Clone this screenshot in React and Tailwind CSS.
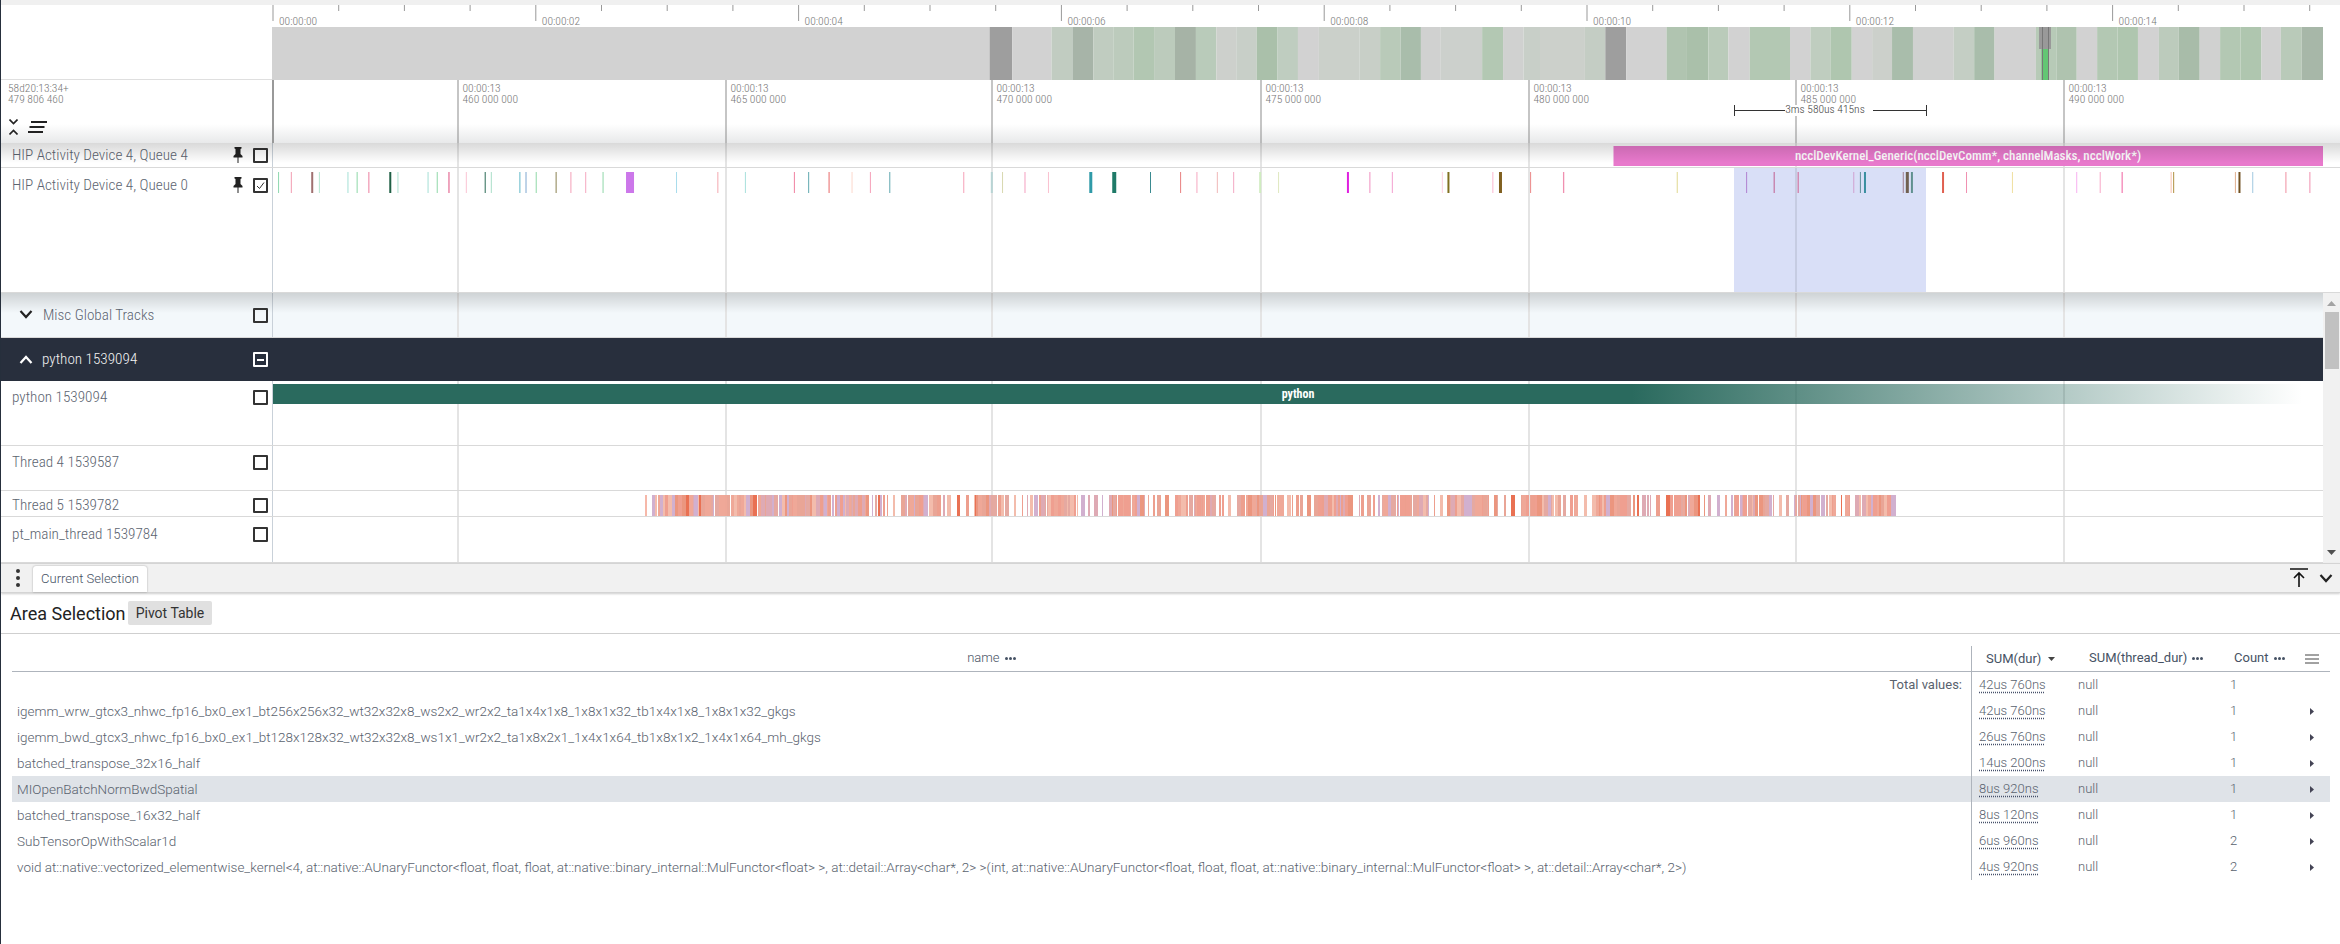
import { Fragment } from 'react';

const FONT = 'Roboto, sans-serif';
const GRID = [458, 726, 992, 1261, 1529, 1796, 2064];

// zoom crops were squeezed by 1.96 horizontally, so the numbers below are read off them and converted back
const at = (base, list) => list.map(([v, c, w = 1]) => [base + v / 1.96, c, w]);
const seg = (base, list) => list.map(([a, b, c]) => [base + a / 1.96, base + b / 1.96, c]);

const QUEUE_MARKS = [
  ...at(0, [[545, '#8ed8b0'], [570, '#f29bb0'], [610, '#a07070', 2], [625, '#b5e5d0'], [681, '#a5e0d5'], [699, '#8ed8a8'], [722, '#ec7f9f'], [763, '#1f5f45', 2], [779, '#aee0d0'], [838, '#a5dfd5'], [856, '#90d8a8'], [879, '#e04f80'], [913, '#fbc4d4'], [950, '#2a6a55'], [962, '#aadfc8'], [1018, '#60b8c8'], [1030, '#7fa8d0'], [1050, '#90d8a8'], [1089, '#8a8050'], [1118, '#f4a0b8'], [1147, '#f6a8c0'], [1181, '#90d8a8'], [1227, '#cc77ea', 8], [1325, '#a8dcec'], [1406, '#f4a8b0'], [1460, '#a8e0dc'], [1556, '#f080a0']]),
  ...at(800, [[16, '#60a8b0'], [56, '#e86868'], [101, '#fcd8cc'], [137, '#f6a0b8'], [175, '#60a8b0'], [320, '#f6a0b8'], [374, '#b8d4d4', 2], [396, '#d8d8b0'], [440, '#f4a0c0'], [486, '#fac0d0'], [567, '#2f9aa8', 3], [612, '#1f7a68', 4], [686, '#3a8a90'], [745, '#e88080'], [777, '#f6a8c0'], [817, '#f0b8b8'], [849, '#f4a8c4'], [900, '#d0ecc0', 2], [937, '#e0e8c0'], [1072, '#e020e0', 2], [1116, '#f090c0'], [1160, '#f4a0d0'], [1258, '#fcd0e0'], [1269, '#807020', 2], [1357, '#fab8d0'], [1370, '#806020', 3], [1431, '#ec8888'], [1496, '#f090b0']]),
  ...at(1540, [[45, '#f090b0'], [268, '#e0d890'], [404, '#b080d0'], [458, '#c06090'], [505, '#d06090'], [614, '#d0a0d0'], [627, '#609098'], [635, '#3a8fa0', 2], [711, '#a08090'], [717, '#706050', 3], [727, '#60908f', 2], [788, '#e06050', 2], [835, '#f090b0'], [925, '#f0e0a0'], [1051, '#f8b0f0'], [1097, '#f8a8c8'], [1140, '#f060a0'], [1236, '#f8c0b0'], [1241, '#b09040'], [1362, '#e0b090'], [1369, '#705020', 2], [1396, '#a0c8e0'], [1461, '#f090a0'], [1508, '#f090b0']]),
];

const OVERVIEW = [
  [272, 990, '#d2d2d2'],
  ...seg(800, [[372, 416, '#9e9e9e'], [416, 493, '#d2d2d2'], [493, 534, '#c1ccc1'], [534, 575, '#a7b4a8'], [575, 614, '#c0ccc0'], [614, 654, '#bccbbc'], [654, 694, '#b2c7b2'], [694, 735, '#bccbbc'], [735, 776, '#a6b3a6'], [776, 816, '#b9cbba'], [816, 855, '#cdd0cc'], [855, 895, '#c8cfc8'], [895, 936, '#aac0aa'], [936, 976, '#bfcdc0'], [976, 1017, '#d2d2d2'], [1017, 1097, '#cbd0ca'], [1097, 1137, '#c8cfc7'], [1137, 1177, '#b9cab9'], [1177, 1217, '#a9bdab'], [1217, 1256, '#d0d1d0'], [1256, 1337, '#ccd0cc'], [1337, 1378, '#b3c8b3'], [1378, 1418, '#d0d1d0'], [1418, 1457, '#c8cfc8'], [1457, 1500, '#cdd0cc']]),
  ...seg(1540, [[0, 88, '#ccd0cb'], [88, 128, '#c4cdc4'], [128, 169, '#9e9e9e'], [169, 248, '#d2d2d2'], [248, 288, '#b0c4b0'], [288, 330, '#aac0aa'], [330, 369, '#bacbba'], [369, 411, '#d2d2d2'], [411, 490, '#b3c8b3'], [490, 530, '#d2d2d2'], [530, 570, '#bfcdbf'], [570, 611, '#afc6af'], [611, 651, '#d2d2d2'], [651, 690, '#ccd0cb'], [690, 731, '#a9bdab'], [731, 811, '#d0d1d0'], [811, 851, '#c4cec4'], [851, 891, '#a9bdab'], [891, 972, '#d2d2d2'], [972, 1012, '#b7cab7'], [1012, 1052, '#afc3af'], [1052, 1092, '#d2d2d2'], [1092, 1132, '#b3c8b3'], [1132, 1172, '#afc6af'], [1172, 1213, '#d2d2d2'], [1213, 1252, '#bccbbc'], [1252, 1293, '#a8bca9'], [1293, 1333, '#d0d1d0'], [1333, 1373, '#b3c8b3'], [1373, 1414, '#afc6af'], [1414, 1452, '#d2d2d2'], [1452, 1493, '#b9cab9'], [1493, 1535, '#a7b7a8']]),
];

// thread 5 is a dense run of tiny slices, a seeded generator is close enough
function threadSlices() {
  const colors = ['#ec9a88', '#e8a090', '#eea392', '#dca5b0', '#cfaccc', '#f2b8a8', '#ea9078', '#ee9a8a', '#e4a49c'];
  let seed = 1539782;
  const rnd = () => {
    seed = (seed * 16807) % 2147483647;
    return seed / 2147483647;
  };
  const out = [[645.5, '#ec6a4a', 1]];
  let x = 652;
  while (x < 1895) {
    const w = 1 + Math.floor(rnd() * 4);
    const c = rnd() > 0.97 ? '#e8694a' : colors[Math.floor(rnd() * colors.length)];
    out.push([x, c, w]);
    const dense = x < 835 || Math.sin(x / 11) > -0.1;
    x += w + (dense ? (rnd() > 0.92 ? 1 : 0) : Math.floor(rnd() * 7));
  }
  return out;
}
const THREAD_MARKS = threadSlices();

function Canvas({ top, height, children }) {
  return (
    <svg width={2051} height={height} viewBox={`272 ${top} 2051 ${height}`} className="block shrink-0">
      <rect x={272} y={top} width={1} height={height} fill="#c9d1d9" />
      {GRID.map((x) => (
        <rect key={x} x={x - 1} y={top} width={2} height={height} fill="#e4e4e4" />
      ))}
      {children}
    </svg>
  );
}

function Marks({ list, y, height, opacity }) {
  return list.map(([x, c, w], i) => <rect key={i} x={x} y={y} width={w} height={height} fill={c} opacity={opacity} />);
}

function Overview() {
  const major = [0, 1, 2, 3, 4, 5, 6, 7];
  const minor = Array.from({ length: 32 }, (_, i) => i);
  return (
    <svg width={2051} height={75} viewBox="272 5 2051 75" className="block shrink-0">
      {minor.map((i) => (
        <rect key={i} x={272.5 + i * 65.7} y={5} width={1} height={i % 4 === 0 ? 16 : 6} fill="#999" />
      ))}
      {major.map((i) => (
        <text key={i} x={279 + i * 262.8} y={25} fontSize={11.5} fontWeight={300} fontStretch="75%" fill="#777" fontFamily={FONT}>
          {`00:00:${String(i * 2).padStart(2, '0')}`}
        </text>
      ))}
      {OVERVIEW.map(([a, b, c], i) => (
        <rect key={i} x={a} y={27} width={b - a} height={53} fill={c} />
      ))}
      <rect x={2039} y={27} width={12} height={22} fill="#999" />
      <rect x={2041.5} y={49} width={7} height={31} fill="#63c774" />
      <rect x={2042} y={27} width={1} height={53} fill="#777" />
      <rect x={2048} y={27} width={1} height={53} fill="#777" />
    </svg>
  );
}

function TimeHeader() {
  const labels = [
    [458, '460 000 000'], [726, '465 000 000'], [992, '470 000 000'], [1261, '475 000 000'],
    [1529, '480 000 000'], [1796, '485 000 000'], [2064, '490 000 000'],
  ];
  return (
    <svg width={2051} height={63} viewBox="272 80 2051 63" className="block shrink-0">
      <rect x={272} y={80} width={2} height={63} fill="#999" />
      {labels.map(([x, t]) => (
        <Fragment key={x}>
          <rect x={x - 0.5} y={80} width={1} height={63} fill="#8c8c8c" />
          <text x={x + 4.5} y={92} fontSize={11.5} fontWeight={300} fontStretch="75%" fill="#777" fontFamily={FONT}>00:00:13</text>
          <text x={x + 4.5} y={103} fontSize={11.5} fontWeight={300} fontStretch="75%" fill="#777" fontFamily={FONT}>{t}</text>
        </Fragment>
      ))}
      <rect x={1785} y={105} width={89} height={11} fill="#fff" />
      <rect x={1734} y={110} width={51} height={1} fill="#333" />
      <rect x={1873} y={110} width={53} height={1} fill="#333" />
      <rect x={1734} y={105} width={1} height={11} fill="#333" />
      <rect x={1926} y={105} width={1} height={11} fill="#333" />
      <text x={1825} y={113} textAnchor="middle" fontSize={11.5} fontWeight={300} fontStretch="75%" fill="#444" fontFamily={FONT}>3ms 580us 415ns</text>
    </svg>
  );
}

function PinIcon() {
  return (
    <svg width={10} height={16} viewBox="0 0 10 16" className="shrink-0">
      <path d="M1.5 0h7v1.5l-1 .5v5l2 2v1.5H5.5V16h-1v-5.5H.5V9l2-2V2l-1-.5z" fill="#222" />
    </svg>
  );
}

function Checkbox({ checked, minus }) {
  const color = minus ? 'border-white' : 'border-[#333]';
  return (
    <div className={`relative flex h-[15px] w-[15px] shrink-0 items-center justify-center rounded-[1px] border-2 ${color}`}>
      {checked && (
        <svg width={9} height={9} viewBox="0 0 9 9" fill="none" stroke="#333" strokeWidth={1}>
          <path d="M1 5l2.5 2.5L8 1.5" />
        </svg>
      )}
      {minus && <div className="h-[2px] w-[7px] bg-white" />}
    </div>
  );
}

function Chevron({ up, color = '#222' }) {
  return (
    <svg width={14} height={9} viewBox="0 0 14 9" fill="none" stroke={color} strokeWidth={2.2} className="shrink-0">
      <path d={up ? 'M1.5 8L7 2l5.5 6' : 'M1.5 1L7 7l5.5-6'} />
    </svg>
  );
}

function TrackRow({ label, labelH, pinned, checked, height, top, children, className = '', shadow }) {
  return (
    <div className={`relative flex shrink-0 border-b border-[#d9d9d9] ${height} ${className}`}>
      <div className={`flex w-[271px] shrink-0 items-center pl-[11px] pr-[4px] text-[15.2px] font-light text-[#5c6470] [font-stretch:75%] ${labelH}`}>
        <span className="flex-1 truncate">{label}</span>
        {pinned && <div className="mr-[10px]"><PinIcon /></div>}
        <Checkbox checked={checked} />
      </div>
      <Canvas top={top} height={parseInt(height.slice(3)) - 1}>{children}</Canvas>
      {shadow && <div className="pointer-events-none absolute inset-x-0 top-0 h-5 bg-gradient-to-b from-black/15 to-transparent" />}
    </div>
  );
}

const ROWS = [
  ['igemm_wrw_gtcx3_nhwc_fp16_bx0_ex1_bt256x256x32_wt32x32x8_ws2x2_wr2x2_ta1x4x1x8_1x8x1x32_tb1x4x1x8_1x8x1x32_gkgs', '42us 760ns', '1'],
  ['igemm_bwd_gtcx3_nhwc_fp16_bx0_ex1_bt128x128x32_wt32x32x8_ws1x1_wr2x2_ta1x8x2x1_1x4x1x64_tb1x8x1x2_1x4x1x64_mh_gkgs', '26us 760ns', '1'],
  ['batched_transpose_32x16_half', '14us 200ns', '1'],
  ['MIOpenBatchNormBwdSpatial', '8us 920ns', '1'],
  ['batched_transpose_16x32_half', '8us 120ns', '1'],
  ['SubTensorOpWithScalar1d', '6us 960ns', '2'],
  ['void at::native::vectorized_elementwise_kernel<4, at::native::AUnaryFunctor<float, float, float, at::native::binary_internal::MulFunctor<float> >, at::detail::Array<char*, 2> >(int, at::native::AUnaryFunctor<float, float, float, at::native::binary_internal::MulFunctor<float> >, at::detail::Array<char*, 2>)', '4us 920ns', '2'],
];

const COLS = 'grid grid-cols-[1960px_99px_154px_75px_30px]';

function Dots() {
  return (
    <span className="ml-[2px] inline-flex gap-px align-middle">
      <i className="h-[3px] w-[3px] rounded-full bg-[#465264]" />
      <i className="h-[3px] w-[3px] rounded-full bg-[#465264]" />
      <i className="h-[3px] w-[3px] rounded-full bg-[#465264]" />
    </span>
  );
}

function Value({ text }) {
  return (
    <div className="pl-[7px] font-light">
      <span className="underline decoration-dotted decoration-[#46506a] underline-offset-[3px]">{text}</span>
    </div>
  );
}

function SelectionTable() {
  return (
    <div className="ml-[11px] mt-3 w-[2318px] text-[13px] text-[#59626e]">
      <div className={`${COLS} h-[26px] border-b border-[#aeb4bc] leading-[24px] text-[#465264]`}>
        <div className="border-r border-[#aeb4bc] text-center font-light">name <Dots /></div>
        <div className="flex items-center pl-[14px]">
          SUM(dur)
          <svg width={7} height={4} viewBox="0 0 7 4" className="ml-[7px]"><path d="M0 0h7L3.5 4z" fill="#444" /></svg>
        </div>
        <div className="pl-[18px]">SUM(thread_dur) <Dots /></div>
        <div className="pl-[9px]">Count <Dots /></div>
        <div className="flex items-center pl-[5px]">
          <svg width={14} height={10} viewBox="0 0 14 10" stroke="#444" strokeWidth={1}>
            <path d="M0 1h14M0 5h14M0 9h14" />
          </svg>
        </div>
      </div>
      <div className={`${COLS} h-[26px] leading-[26px]`}>
        <div className="border-r border-[#aeb4bc] pr-[9px] text-right">Total values:</div>
        <Value text="42us 760ns" />
        <div className="pl-[7px] font-light">null</div>
        <div className="pl-[5px] font-light">1</div>
        <div />
      </div>
      {ROWS.map(([name, dur, count]) => (
        <div key={name} className={`${COLS} h-[26px] leading-[26px] ${name.startsWith('MIOpen') ? 'bg-[#dfe3e8]' : ''}`}>
          <div className="truncate border-r border-[#aeb4bc] pl-[5px] text-[13.5px] font-light">{name}</div>
          <Value text={dur} />
          <div className="pl-[7px] font-light">null</div>
          <div className="pl-[5px] font-light">{count}</div>
          <div className="flex items-center pl-[10px]">
            <svg width={4} height={7} viewBox="0 0 4 7"><path d="M0 0l4 3.5L0 7z" fill="#445" /></svg>
          </div>
        </div>
      ))}
    </div>
  );
}

export default function App() {
  return (
    <div className="flex h-screen w-screen flex-col overflow-hidden border-l border-[#262f3c] bg-white" style={{ fontFamily: FONT }}>
      <div className="h-[5px] shrink-0 bg-[#f0f0f0]" />

      <div className="flex h-[75px] shrink-0">
        <div className="w-[271px] shrink-0 border-b border-[#dfdfdf]" />
        <Overview />
      </div>

      <div className="flex h-[63px] shrink-0 bg-gradient-to-b from-white from-70% to-[#e8e9ea]">
        <div className="flex w-[271px] shrink-0 flex-col pl-[7px] pt-[3px] text-[11.5px] font-light leading-[11px] text-[#777] [font-stretch:75%]">
          <div>58d20:13:34+</div>
          <div>479 806 460</div>
          <div className="mt-[14px] flex items-center gap-[10px] pl-[1px]">
            <div className="flex flex-col gap-[4px]">
              <svg width={9} height={6} viewBox="0 0 9 6" fill="none" stroke="#222" strokeWidth={1.6}><path d="M.5 .5l4 4 4-4" /></svg>
              <svg width={9} height={6} viewBox="0 0 9 6" fill="none" stroke="#222" strokeWidth={1.6}><path d="M.5 5.5l4-4 4 4" /></svg>
            </div>
            <svg width={19} height={12} viewBox="0 0 19 12" stroke="#222" strokeWidth={2}>
              <path d="M3 1h16M1.5 6h15M0 11h15" />
            </svg>
          </div>
        </div>
        <TimeHeader />
      </div>

      <TrackRow label="HIP Activity Device 4, Queue 4" labelH="h-[24px]" height="h-[25px]" top={143} pinned shadow>
        <rect x={1613.5} y={146} width={710} height={20} fill="#e879cc" />
        <text x={1968} y={160} textAnchor="middle" fontSize={13} fontWeight={500} fontStretch="75%" fill="#fff" fontFamily={FONT}>
          ncclDevKernel_Generic(ncclDevComm*, channelMasks, ncclWork*)
        </text>
      </TrackRow>

      <TrackRow label="HIP Activity Device 4, Queue 0" labelH="h-[34px]" height="h-[125px]" top={168} pinned checked>
        <rect x={1734} y={168} width={192} height={125} fill="#d9dff7" />
        <rect x={1795} y={168} width={2} height={125} fill="#c6cce2" />
        <Marks list={QUEUE_MARKS} y={172} height={21} />
      </TrackRow>

      <div className="flex h-[270px] shrink-0">
        <div className="w-[2322px] shrink-0">
          <TrackRow label={<span className="flex items-center gap-[10px] pl-[7px]"><Chevron />Misc Global Tracks</span>} labelH="h-[44px]" height="h-[45px]" top={293} className="bg-[#f3f8fb]" shadow />

          <div className="flex h-[43px] items-center bg-[#282f3d] pl-[18px] pr-[3px] text-[15.2px] font-light text-[#f2f2f2] [font-stretch:75%]">
            <Chevron up color="#fff" />
            <span className="ml-[9px] w-[211px]">python 1539094</span>
            <Checkbox minus />
          </div>

          <TrackRow label="python 1539094" labelH="h-[32px]" height="h-[65px]" top={381}>
            <defs>
              <linearGradient id="fade" x1="0" x2="1" y1="0" y2="0">
                <stop offset="0.663" stopColor="#2a6a5e" />
                <stop offset="0.99" stopColor="#2a6a5e" stopOpacity="0" />
              </linearGradient>
            </defs>
            <rect x={273} y={384} width={2050} height={20} fill="url(#fade)" />
            <text x={1298} y={398} textAnchor="middle" fontSize={12} fontWeight={700} fontStretch="75%" fill="#fff" fontFamily={FONT}>python</text>
          </TrackRow>

          <TrackRow label="Thread 4 1539587" labelH="h-[32px]" height="h-[45px]" top={446} />

          <TrackRow label="Thread 5 1539782" labelH="h-[25px] pt-[3px]" height="h-[26px]" top={491}>
            <Marks list={THREAD_MARKS} y={495} height={21} opacity={0.95} />
          </TrackRow>

          <TrackRow label="pt_main_thread 1539784" labelH="h-[34px]" height="h-[46px]" top={517} />
        </div>

        {/* scrollbar */}
        <div className="flex flex-1 flex-col items-center bg-[#f1f1f1] py-[8px]">
          <svg width={9} height={5} viewBox="0 0 9 5"><path d="M0 5L4.5 0 9 5z" fill="#a3a3a3" /></svg>
          <div className="mt-[6px] h-[57px] w-[14px] bg-[#c1c1c1]" />
          <div className="flex-1" />
          <svg width={9} height={5} viewBox="0 0 9 5"><path d="M0 0h9L4.5 5z" fill="#505050" /></svg>
        </div>
      </div>

      <div className="flex h-[30px] shrink-0 items-end border-y border-[#d4d4d4] bg-[#f1f1f1] shadow-[0_1px_2px_rgba(0,0,0,0.2)]">
        <div className="flex h-full w-[32px] flex-col items-center justify-center gap-[3px] pl-[1px]">
          <div className="h-1 w-1 rounded-full bg-[#333]" />
          <div className="h-1 w-1 rounded-full bg-[#333]" />
          <div className="h-1 w-1 rounded-full bg-[#333]" />
        </div>
        <div className="flex h-[26px] w-[114px] items-center justify-center rounded-t-[3px] bg-white text-[13px] font-light text-[#465264] shadow-[0_0_2px_rgba(0,0,0,0.35)]">
          Current Selection
        </div>
        <div className="flex-1" />
        <div className="flex h-full items-center gap-[11px] pr-[7px]">
          <svg width={18} height={20} viewBox="0 0 18 20" fill="none" stroke="#111" strokeWidth={1.6}>
            <path d="M0 1h18M9 19V5M4 10l5-5 5 5" />
          </svg>
          <Chevron />
        </div>
      </div>

      <div className="flex h-[41px] shrink-0 items-center gap-[7px] border-b border-[#cfcfcf] pl-[9px]">
        <span className="w-[111px] whitespace-nowrap text-[18px] text-[#222] [font-stretch:90%]">Area Selection</span>
        <span className="flex h-[24px] w-[84px] items-center justify-center rounded-[2px] bg-[#e0e0e0] text-[14px] text-[#333] [font-stretch:90%]">Pivot Table</span>
      </div>

      <SelectionTable />
    </div>
  );
}
